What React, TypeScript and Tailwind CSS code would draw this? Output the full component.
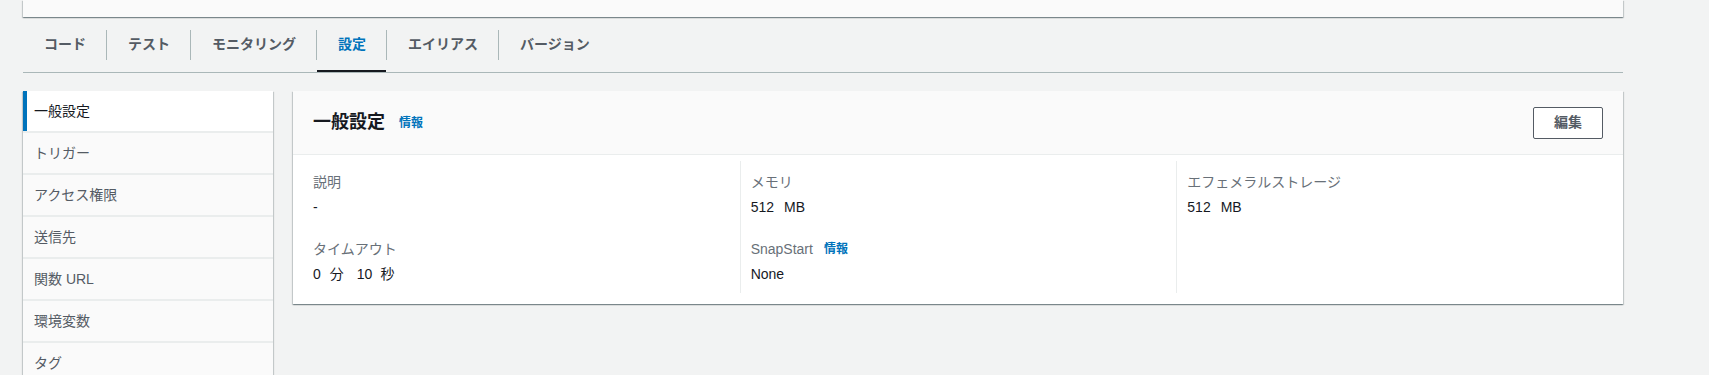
import React from "react";

const font = "font-['Liberation_Sans','Noto_Sans_CJK_JP',sans-serif]";
const cardShadow =
  "shadow-[0_1px_1px_0_rgba(0,28,36,0.3),1px_1px_1px_0_rgba(0,28,36,0.15),-1px_1px_1px_0_rgba(0,28,36,0.15)]";

const tabs = ["コード", "テスト", "モニタリング", "設定", "エイリアス", "バージョン"];
const navItems = ["一般設定", "トリガー", "アクセス権限", "送信先", "関数 URL", "環境変数", "タグ"];

function Tabs() {
  return (
    <div className="flex h-[56px] items-center border-b border-[#aab7b8]">
      {tabs.map((t, i) => (
        <React.Fragment key={t}>
          {i > 0 && <div className="h-[30px] w-px bg-[#aab7b8]" />}
          <div
            className={`relative flex h-full items-center pl-[21px] pr-[20px] text-[14px] font-bold ${
              t === "設定" ? "text-[#0073bb]" : "text-[#545b64]"
            }`}
          >
            {t}
            {t === "設定" && <div className="absolute bottom-0 left-0 right-0 h-[2px] bg-[#16191f]" />}
          </div>
        </React.Fragment>
      ))}
    </div>
  );
}

function SideNav() {
  return (
    <div className={`flex w-[250px] shrink-0 flex-col gap-[2px] bg-[#eaeded] ${cardShadow}`}>
      {navItems.map((n, i) => (
        <div
          key={n}
          className={`flex h-[40px] shrink-0 items-center border-l-4 pl-[7px] text-[14px] ${
            i === 0
              ? "border-[#0073bb] bg-white text-[#16191f]"
              : "border-transparent bg-[#fafafa] text-[#545b64]"
          }`}
        >
          {n}
        </div>
      ))}
    </div>
  );
}

function Field({ label, info, children, first }: { label: string; info?: boolean; children: React.ReactNode; first?: boolean }) {
  return (
    <div className={first ? "" : "mt-[22px]"}>
      <div className="flex items-center text-[14px] leading-[20px] text-[#687078]">
        {label}
        {info && <span className="ml-[11px] text-[12px] font-bold text-[#0073bb]">情報</span>}
      </div>
      <div className="mt-[5px] text-[14px] leading-[20px] text-[#16191f]">{children}</div>
    </div>
  );
}

function GeneralSettings() {
  return (
    <div className={`flex-1 self-start bg-white ${cardShadow}`}>
      <div className="flex h-[64px] items-center justify-between border-b border-[#eaeded] bg-[#fafafa] px-5">
        <div className="flex items-center">
          <span className="text-[18px] font-bold text-[#16191f]">一般設定</span>
          <span className="ml-[14px] text-[12px] font-bold text-[#0073bb]">情報</span>
        </div>
        <button className="h-[32px] rounded-[2px] border border-[#545b64] bg-white px-5 text-[14px] font-bold text-[#545b64]">
          編集
        </button>
      </div>
      <div className="px-5 pb-[11px] pt-[6px]">
        <div className="-mx-[10px] grid grid-cols-3">
          <div className="px-[10px] pb-[9px] pt-[11px]">
            <Field label="説明" first>
              -
            </Field>
            <Field label="タイムアウト">
              <span>0</span>
              <span className="ml-[9px]">分</span>
              <span className="ml-[13px]">10</span>
              <span className="ml-[8px]">秒</span>
            </Field>
          </div>
          <div className="border-l border-[#eaeded] px-[10px] pb-[9px] pt-[11px]">
            <Field label="メモリ" first>
              <span>512</span>
              <span className="ml-[10px]">MB</span>
            </Field>
            <Field label="SnapStart" info>
              None
            </Field>
          </div>
          <div className="border-l border-[#eaeded] px-[10px] pb-[9px] pt-[11px]">
            <Field label="エフェメラルストレージ" first>
              <span>512</span>
              <span className="ml-[10px]">MB</span>
            </Field>
          </div>
        </div>
      </div>
    </div>
  );
}

export default function App() {
  return (
    <div className={`h-[375px] w-full overflow-hidden bg-[#f2f3f3] pl-[23px] ${font}`}>
      <div className="w-[1600px]">
        <div className={`h-[17px] bg-[#fafafa] ${cardShadow}`} />
        <Tabs />
        <div className="mt-[18px] flex gap-[20px]">
          <SideNav />
          <GeneralSettings />
        </div>
      </div>
    </div>
  );
}
